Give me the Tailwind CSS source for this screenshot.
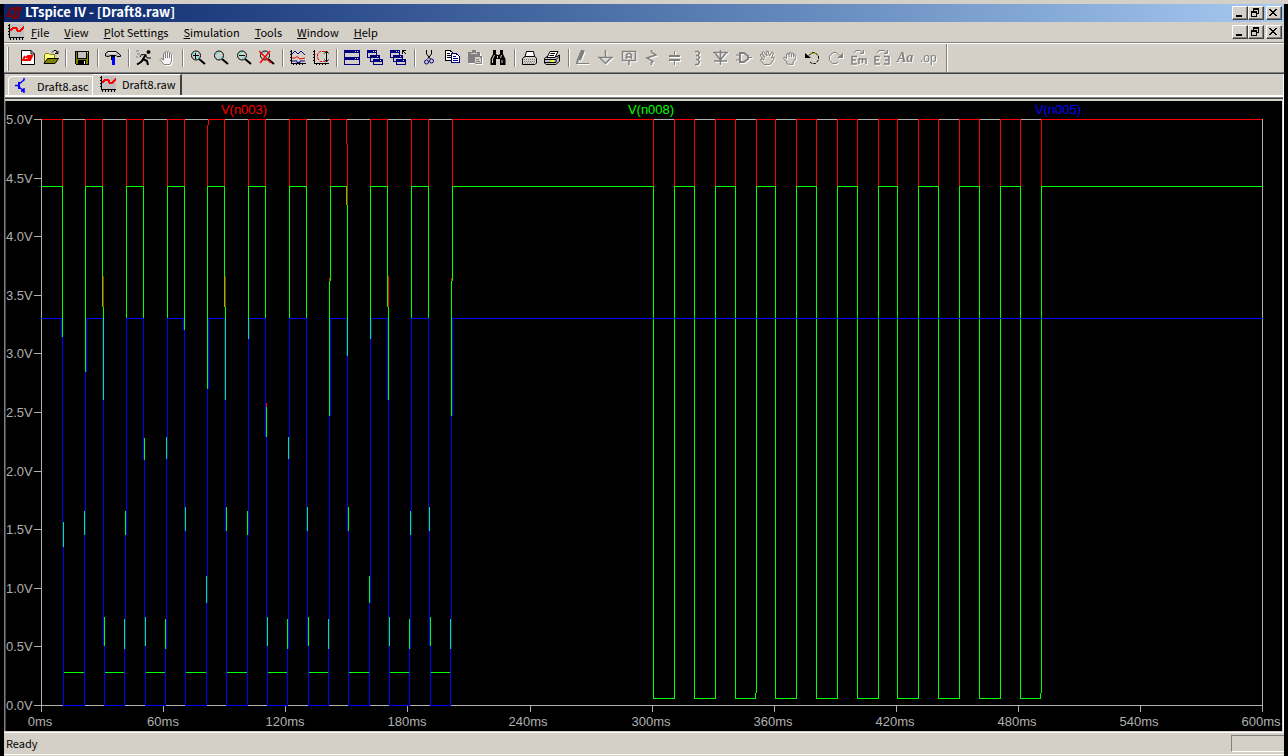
<!DOCTYPE html>
<html lang="en">
<head>
<meta charset="utf-8">
<title>LTspice IV - [Draft8.raw]</title>
<script src="https://cdn.jsdelivr.net/npm/@tailwindcss/browser@4"></script>
</head>
<body class="flex min-h-screen flex-col bg-black font-['Noto_Sans_CJK_JP',sans-serif] text-[11px] leading-4 text-black">
<div class="h-1 bg-[#d4d0c8]"></div>
<div class="ml-1 mr-1 flex flex-1 flex-col bg-[#d4d0c8]">

<!-- title bar -->
<header class="flex h-[18px] items-center bg-linear-to-r from-[#0a246a] to-[#a6caf0] pr-[2px] pl-[3px]">
  <svg class="mr-[3px] h-3 w-[15px]" viewBox="0 0 15 12" fill="none" stroke="#800000" stroke-width="2"><path d="M4 0L1 9H7M5 3L8 1H14L10 11H5M10 1L7 9"/></svg>
  <h1 class="flex-1 pb-[2px] text-[13px] font-bold text-white">LTspice IV - [Draft8.raw]</h1>
  <div class="flex">
    <button aria-label="Minimize" class="h-[14px] w-4 border border-t-white border-l-white border-r-[#404040] border-b-[#404040] bg-[#d4d0c8] shadow-[inset_-1px_-1px_#808080]"><svg class="size-3" viewBox="0 0 12 12"><path d="M3 8h6v2H3z"/></svg></button>
    <button aria-label="Restore" class="mr-[2px] h-[14px] w-4 border border-t-white border-l-white border-r-[#404040] border-b-[#404040] bg-[#d4d0c8] shadow-[inset_-1px_-1px_#808080]"><svg class="size-3" viewBox="0 0 12 12" shape-rendering="crispEdges"><path d="M4 1h6v6H8V6h1V3H5v1H4zM2 4h6v6H2zM3 6v3h4V6z" fill-rule="evenodd"/></svg></button>
    <button aria-label="Close" class="h-[14px] w-4 border border-t-white border-l-white border-r-[#404040] border-b-[#404040] bg-[#d4d0c8] shadow-[inset_-1px_-1px_#808080]"><svg class="size-3" viewBox="0 0 12 12" shape-rendering="crispEdges"><path d="M2 2h2v1h1v1h2V3h1V2h2v1H9v1H8v1H7v1h1v1h1v1h1v1H8V8H7V7H5v1H4v1H2V8h1V7h1V6h1V5H4V4H3V3H2z"/></svg></button>
  </div>
</header>

<!-- menu bar -->
<nav class="flex h-[22px] items-center border-b border-white pr-[2px] pb-[2px] pl-1 shadow-[inset_0_-1px_#808080]">
  <svg class="mr-[7px] size-4 bg-[#c0c0c0]" viewBox="0 0 16 16" shape-rendering="crispEdges"><use href="#wave"/></svg>
  <div class="flex flex-1 gap-[15px]">
    <button><u>F</u>ile</button><button><u>V</u>iew</button><button><u>P</u>lot Settings</button><button><u>S</u>imulation</button><button><u>T</u>ools</button><button><u>W</u>indow</button><button><u>H</u>elp</button>
  </div>
  <div class="flex">
    <button aria-label="Minimize plot" class="h-[14px] w-4 border border-t-white border-l-white border-r-[#404040] border-b-[#404040] shadow-[inset_-1px_-1px_#808080]"><svg class="size-3" viewBox="0 0 12 12"><path d="M3 8h6v2H3z"/></svg></button>
    <button aria-label="Restore plot" class="mr-[2px] h-[14px] w-4 border border-t-white border-l-white border-r-[#404040] border-b-[#404040] shadow-[inset_-1px_-1px_#808080]"><svg class="size-3" viewBox="0 0 12 12" shape-rendering="crispEdges"><path d="M4 1h6v6H8V6h1V3H5v1H4zM2 4h6v6H2zM3 6v3h4V6z" fill-rule="evenodd"/></svg></button>
    <button aria-label="Close plot" class="h-[14px] w-4 border border-t-white border-l-white border-r-[#404040] border-b-[#404040] shadow-[inset_-1px_-1px_#808080]"><svg class="size-3" viewBox="0 0 12 12" shape-rendering="crispEdges"><path d="M2 2h2v1h1v1h2V3h1V2h2v1H9v1H8v1H7v1h1v1h1v1h1v1H8V8H7V7H5v1H4v1H2V8h1V7h1V6h1V5H4V4H3V3H2z"/></svg></button>
  </div>
</nav>

<!-- toolbar -->
<div role="toolbar" class="flex h-[30px] items-stretch border-b border-[#404040] pb-[2px] shadow-[inset_0_-1px_#808080]">
  <i class="mt-[3px] mr-[11px] ml-[3px] w-[2px] border-r border-[#808080] bg-white"></i>
  <button aria-label="New schematic" class="w-[23px]"><svg class="size-4" viewBox="0 0 16 16"><path d="M1.500 .5H11L14.500 4V14.500H1.500Z" fill="#fff" stroke="#000"/><path d="M11 .5V4h3.500" fill="none" stroke="#000"/><path d="M5 6L3 10H7M6 8L8 6H12L10 10H7M10 6L8 10" fill="none" stroke="#f00" stroke-width="2"/></svg></button>
  <button aria-label="Open" class="w-[31px]"><span class="flex h-[18px] items-center"><svg class="mr-[6px] size-4" viewBox="0 0 16 16"><path d="M1.500 13V4.500L3 3.500H6L7 4.500H11.500V8" fill="#ffff80" stroke="#808000"/><path d="M1 13.500L4.500 8.500H15.500L12 13.500Z" fill="#808000" stroke="#000"/><path d="M9 2.500L11 .5H13L14.500 3.500M12 3.500h3V1" fill="none" stroke="#000"/></svg><i class="h-[18px] w-[2px] border-r border-white bg-[#808080]"></i></span></button>
  <button aria-label="Save" class="w-[31px]"><span class="flex h-[18px] items-center"><svg class="mr-[7px] size-4" viewBox="0 0 16 16" shape-rendering="crispEdges"><path d="M1 1H15V15H2L1 14Z"/><path d="M2 2H3V9H13V2H14V14H2Z" fill="#808000"/><path d="M4 2H12V8H4Z" fill="#c0c0c0"/><path d="M4 10H12V15H4Z"/><path d="M10 11H11V14H10ZM13 2H14V3H13Z" fill="#fff"/></svg><i class="h-[18px] w-[2px] border-r border-white bg-[#808080]"></i></span></button>
  <button aria-label="Control panel" class="w-[31px]"><span class="flex h-[18px] items-center"><svg class="mr-[7px] size-4" viewBox="0 0 16 16"><path d="M.5 6V3.500L3 1.500H11L15.500 5V6.500H12L11 5.500H6L3 6.500Z" fill="#c0c0c0" stroke="#000"/><path d="M3 3H11" stroke="#fff"/><path d="M6 6H10V10H6Z"/><path d="M7 7H10V15H7Z" fill="#00f"/></svg><i class="h-[18px] w-[2px] border-r border-white bg-[#808080]"></i></span></button>
  <button aria-label="Run" class="w-[23px]"><svg class="size-4" viewBox="0 0 16 16" fill="none" stroke="#000"><circle cx="12.500" cy="2" r="1.500" fill="#000"/><path d="M10 4.500L7 9L11 11L12 15M7.500 9L5 12L1 14.500" stroke-width="2"/><path d="M10 5L5.500 4.500L4 7M9.500 5L11 8H15"/><path d="M0 1H3M1 4H4M0 7H2" stroke="#808080"/></svg></button>
  <button aria-label="Halt" class="w-[31px]"><span class="flex h-[18px] items-center"><svg class="mr-[7px] size-4 drop-shadow-[1px_1px_0_#fff]" viewBox="0 0 16 16" fill="#f4f4f4" stroke="#808080"><path d="M5 14.500L1 9.500L2 8.500L4.500 10V3.500L5.500 3L6.500 3.500V8V2L7.500 1L8.500 2V8V2.500L9.500 1.500L10.500 2.500V8V4.500L11.500 3.500L12.500 4.500V11L11 14.500Z"/></svg><i class="h-[18px] w-[2px] border-r border-white bg-[#808080]"></i></span></button>
  <button aria-label="Zoom in" class="w-[23px]"><svg class="size-4" viewBox="0 0 16 16"><use href="#lens"/><path d="M3 5.500H9M5.500 3V9" stroke="#000"/></svg></button>
  <button aria-label="Pan" class="w-[23px]"><svg class="size-4" viewBox="0 0 16 16"><use href="#lens"/></svg></button>
  <button aria-label="Zoom out" class="w-[23px]"><svg class="size-4" viewBox="0 0 16 16"><use href="#lens"/><path d="M3 5.500H9" stroke="#000"/></svg></button>
  <button aria-label="Zoom full extents" class="w-[31px]"><span class="flex h-[18px] items-center"><svg class="mr-[7px] size-4" viewBox="0 0 16 16"><use href="#lens"/><path d="M0 1L12 13M11 1L1 13" stroke="#f00" stroke-width="1.500"/></svg><i class="h-[18px] w-[2px] border-r border-white bg-[#808080]"></i></span></button>
  <button aria-label="Pick visible traces" class="w-[23px]"><svg class="size-4" viewBox="0 0 16 16" fill="none"><use href="#axes"/><path d="M2 4L5 1L8 4L11 1L15 5M2 11H7V12.500H10V11H15" stroke="#00008b"/><path d="M2 8H5L7 6.500L10 9L15 8" stroke="#f00"/></svg></button>
  <button aria-label="Autorange" class="w-[31px]"><span class="flex h-[18px] items-center"><svg class="mr-[7px] size-4" viewBox="0 0 16 16" fill="none"><use href="#axes"/><path d="M12 1.500H7L4.500 4V8L7 11.500H12" stroke="#f00" stroke-dasharray="3 1"/><path d="M13.500 1V12M11.500 3.500L13.500 1L15.500 3.500M11.500 9.500L13.500 12L15.500 9.500" stroke="#000"/></svg><i class="h-[18px] w-[2px] border-r border-white bg-[#808080]"></i></span></button>
  <button aria-label="Tile windows" class="w-[23px]"><svg class="size-4" viewBox="0 0 16 16" shape-rendering="crispEdges"><path d="M0 0H16V15H0Z" fill="#000080"/><path d="M1 3H15V7H1ZM1 10H15V14H1ZM11 1H12V2H11ZM13 1H14V2H13ZM11 8H12V9H11ZM13 8H14V9H13Z" fill="#d4d0c8"/></svg></button>
  <button aria-label="Cascade windows" class="w-[23px]"><svg class="size-4" viewBox="0 0 16 16" shape-rendering="crispEdges"><use href="#cascade"/></svg></button>
  <button aria-label="Close windows" class="w-[31px]"><span class="flex h-[18px] items-center"><svg class="mr-[8px] size-4" viewBox="0 0 16 16" shape-rendering="crispEdges"><use href="#cascade"/><path d="M10 0H16V5H10Z" fill="#d4d0c8"/><path d="M12 0H16V1H14V2H15V3H16V4H15V3H14V2H13V4H12Z"/></svg><i class="h-[18px] w-[2px] border-r border-white bg-[#808080]"></i></span></button>
  <button aria-label="Cut" class="w-[23px]"><svg class="size-4" viewBox="0 0 16 16" fill="none"><path d="M5.500 0V4L9.500 9M10.500 0V4L6.500 9" stroke="#000"/><circle cx="5.500" cy="12" r="2" stroke="#000080"/><circle cx="10.500" cy="11" r="2" stroke="#000080"/></svg></button>
  <button aria-label="Copy" class="w-[23px]"><svg class="size-4" viewBox="0 0 16 16" fill="#fff" shape-rendering="crispEdges"><path d="M1.500 .5H6L9.500 3.500V10.500H1.500Z" stroke="#000"/><path d="M3 3.500H6M3 5.500H7M3 7.500H7" stroke="#000"/><path d="M7.500 3.500H12L15.500 6.500V12.500H7.500Z" stroke="#000080"/><path d="M9 6.500H12M9 8.500H14M9 10.500H14" stroke="#000080"/></svg></button>
  <button aria-label="Paste" class="w-[23px]"><svg class="size-4 drop-shadow-[1px_1px_0_#fff]" viewBox="0 0 16 16" shape-rendering="crispEdges"><path d="M1 2H5V0H9V2H13V6H15V14H8V13H1Z" fill="#808080"/><path d="M4 3H10V4H4ZM8 7H13V8H14V13H8ZM9 9V10H12V9Z" fill="#d4d0c8"/><path d="M9 11H13V12H9Z" fill="#808080"/></svg></button>
  <button aria-label="Find" class="w-[31px]"><span class="flex h-[18px] items-center"><svg class="mr-[8px] size-4" viewBox="0 0 16 16"><path d="M3 0H6V4L7.500 5H8.500L10 4V0H13V4L15.500 9V15H10V9H6V15H.5V9L3 4Z"/><path d="M4.500 5L2.500 9V13M11.500 5L10.500 8M12 10V13M7.500 6V8" stroke="#d4d0c8"/></svg><i class="h-[18px] w-[2px] border-r border-white bg-[#808080]"></i></span></button>
  <button aria-label="Print setup" class="w-[23px]"><svg class="size-4" viewBox="0 0 16 16"><path d="M1.500 14.500V8.500L4 6.500H14L15.500 8.500V13L14 14.500Z" fill="#d4d0c8" stroke="#000"/><path d="M4 6.500L5.500 1.500H12.500L13.500 6.500Z" fill="#fff" stroke="#000"/><path d="M3 9.500H14M3 11.500H14M4 13H14" stroke="#808080" stroke-dasharray="1 1"/></svg></button>
  <button aria-label="Print" class="w-[31px]"><span class="flex h-[18px] items-center"><svg class="mr-[8px] size-4" viewBox="0 0 16 16"><path d="M.5 8.500L3 6.500H13L15.500 5V11L12 14.500H2L.5 13Z" fill="#c0c0c0" stroke="#000"/><path d="M3 7.500L6 1.500H14L11 7.500Z" fill="#fff" stroke="#000"/><path d="M6.500 3.500H11M5.500 5.500H10M1 9.500H12L15 6.500M1 12.500H12V9.500" fill="none" stroke="#000"/><path d="M7 11H10" stroke="#ff0" stroke-width="2"/></svg><i class="h-[18px] w-[2px] border-r border-white bg-[#808080]"></i></span></button>

  <button aria-label="Wire" class="w-[23px]"><svg class="size-4 drop-shadow-[1px_1px_0_#fff]" viewBox="0 0 16 16" fill="none" stroke="#808080"><path d="M8 0L4 10" stroke-width="4"/><path d="M2 14L3 9" stroke-width="2"/><path d="M1 13.500H14"/></svg></button>
  <button aria-label="Ground" class="w-[23px]"><svg class="size-4 drop-shadow-[1px_1px_0_#fff]" viewBox="0 0 16 16" fill="none" stroke="#808080"><path d="M7.500 0V7M0 7.500H15M2 8L7.500 13.500L13 8" stroke-width="1.500"/></svg></button>
  <button aria-label="Label net" class="w-[23px]"><svg class="size-4 drop-shadow-[1px_1px_0_#fff]" viewBox="0 0 16 16" fill="none" stroke="#808080"><path d="M1.500 1.500H14.500V10.500H1.500ZM8 10.500V15" stroke-width="1.500"/><path d="M5.500 9V5L7 3.500H9L10.500 5V9M5.500 7H10.500" stroke-width="1.500"/></svg></button>
  <button aria-label="Resistor" class="w-[23px]"><svg class="size-4 drop-shadow-[1px_1px_0_#fff]" viewBox="0 0 16 16" fill="none" stroke="#808080"><path d="M7.500 0V2L12 5L3 8L9 11.500L7.500 12.500V15" stroke-width="1.500"/></svg></button>
  <button aria-label="Capacitor" class="w-[23px]"><svg class="size-4 drop-shadow-[1px_1px_0_#fff]" viewBox="0 0 16 16" fill="none" stroke="#808080"><path d="M7.500 1V6M7.500 10V15" /><path d="M2 6H13M2 10H13" stroke-width="2"/></svg></button>
  <button aria-label="Inductor" class="w-[23px]"><svg class="size-4 drop-shadow-[1px_1px_0_#fff]" viewBox="0 0 16 16" fill="none" stroke="#808080"><path d="M5 1.500H8L9.500 3L8 5.500H6H8L9.500 7.500L8 9.500H6H8L9.500 12L8 14.500H5" stroke-width="1.500"/></svg></button>
  <button aria-label="Diode" class="w-[23px]"><svg class="size-4 drop-shadow-[1px_1px_0_#fff]" viewBox="0 0 16 16" fill="none" stroke="#808080"><path d="M0 2.500H15M1 11H14" stroke-width="1.500"/><path d="M2 3L7.500 10L13 3M7.500 0V15" stroke-width="1.500"/></svg></button>
  <button aria-label="Component" class="w-[23px]"><svg class="size-4 drop-shadow-[1px_1px_0_#fff]" viewBox="0 0 16 16" fill="none" stroke="#808080"><path d="M4 3H8L12 6V9L8 12H4Z" stroke-width="2"/><path d="M0 5H4M0 10H4M12 7.500H16"/></svg></button>
  <button aria-label="Move" class="w-[23px]"><svg class="size-4 drop-shadow-[1px_1px_0_#fff]" viewBox="0 0 16 16" fill="none" stroke="#808080"><path d="M5 14.500L1.500 10L2.500 8.500L5 10L1 5L2 4L6 7.500L3 2.500L4.500 1.500L8 6L7.500 1.500L9 1L10.500 6L13 2L14.500 3L12.500 8L15 7V9L11 14.500Z"/></svg></button>
  <button aria-label="Drag" class="w-[23px]"><svg class="size-4 drop-shadow-[1px_1px_0_#fff]" viewBox="0 0 16 16" fill="none" stroke="#808080"><path d="M5 14V12L1.500 8.500L2.500 7L4.500 8.500V4L6 3L7 5V3L8.500 2L9.500 4V3.500L11 3L11.500 5L13 4.500L13.500 9L11 12V14.500ZM7 5V7M9.500 4V7M11.500 5V7"/></svg></button>
  <button aria-label="Undo" class="w-[23px]"><svg class="size-4" viewBox="0 0 16 16" fill="none" stroke="#000"><path d="M4 5.500L7 2.500H10L13.500 6V10L10.500 13.500H7L5 12" stroke-dasharray="3 1"/><path d="M5 4L8 3H10L12.500 5.500" stroke="#808000"/><path d="M0 3L6 8H0Z" fill="#000" stroke="none"/></svg></button>
  <button aria-label="Redo" class="w-[23px]"><svg class="size-4 drop-shadow-[1px_1px_0_#fff]" viewBox="0 0 16 16" fill="none" stroke="#808080"><path d="M11.500 5.500L8 2.500H5L1.500 6V10L4.500 13.500H8L10 12"/><path d="M15 3V8H9Z" fill="#808080" stroke="none"/></svg></button>
  <button aria-label="Rotate" class="w-[23px]"><svg class="size-4 drop-shadow-[1px_1px_0_#fff]" viewBox="0 0 16 16" fill="none" stroke="#808080"><path d="M3 3L5 .5H9L12 3M9 3.500H12.500V0"/><path d="M6 6.500H1V14H6M1 10H5M8 14V9H15V14M11.500 9V13" stroke-width="1.500"/></svg></button>
  <button aria-label="Mirror" class="w-[23px]"><svg class="size-4 drop-shadow-[1px_1px_0_#fff]" viewBox="0 0 16 16" fill="none" stroke="#808080"><path d="M3 3L5 .5H10L13 3M10 3.500H13.500V0"/><path d="M6 6.500H1V14H6M1 10H5M10 6.500H15V14H10M15 10H11" stroke-width="1.500"/></svg></button>
  <button aria-label="Text" class="w-[23px] text-left font-['Liberation_Serif',serif] text-[14px] font-bold text-[#808080] italic drop-shadow-[1px_1px_0_#fff]">Aa</button>
  <button aria-label="SPICE directive" class="w-[26px] text-left font-['Liberation_Sans',sans-serif] text-[12px] text-[#808080] drop-shadow-[1px_1px_0_#fff]">.op</button>
  <i class="-mb-px w-[2px] border-r border-white bg-[#808080]"></i>
</div>

<!-- document area -->
<main class="flex flex-1 flex-col border-r border-l border-r-white border-l-[#808080]">
  <div role="tablist" class="flex h-[23px] items-end border-b-2 border-white pl-[3px]">
    <button role="tab" class="flex h-[19px] w-[85px] items-center gap-[6px] rounded-tl-sm border-t border-r border-l border-white pl-[6px]">
      <svg class="size-4" viewBox="0 0 16 16" fill="none" stroke="#00f"><path d="M4 4V11" stroke-width="2"/><path d="M0 7.500H4M4 6L9 2V0M4 9L9 13V15M6 13H9V10" stroke-width="1.500"/></svg>Draft8.asc</button>
    <button role="tab" aria-selected="true" class="flex h-[21px] w-[89px] items-center gap-[6px] border-t border-r-2 border-t-white border-r-[#404040] pb-[2px] pl-[7px]">
      <svg class="size-4 bg-[#c0c0c0]" viewBox="0 0 16 16" shape-rendering="crispEdges"><use href="#wave"/></svg>Draft8.raw</button>
  </div>
  <div class="h-1 border-t border-b border-t-[#808080] border-b-[#d4d0c8] bg-[#d4d0c8] shadow-[inset_0_1px_#404040]"></div>
  <div class="mr-px flex flex-1 border-l border-[#404040] bg-black">
    <svg class="w-full flex-1" viewBox="6 101 1276 630" role="img" aria-label="Waveform plot">
      <g transform="translate(.5 .5)" fill="none" stroke-linecap="square" shape-rendering="crispEdges">
        <path stroke="#b0b0b0" d="M34 119H1262V711M41 119V711M34 705H1262M34 178H41M34 236H41M34 295H41M34 353H41M34 412H41M34 471H41M34 529H41M34 588H41M34 646H41M163 705V711M285 705V711M407 705V711M530 705V711M652 705V711M774 705V711M896 705V711M1018 705V711M1140 705V711"/>
        <path stroke="#f00" d="M42 119H62V186M85 186V119H102V186M103 276V306M126 186V119H143V186M167 186V119H184V186M207 186V125M208 124V119H224V186M225 276V306M248 186V119H265V186M266 403V407M289 186V119H306V186M330 186V119H346V143M329 278V280M347 144V204M370 186V119H387V186M388 276V306M411 186V119H428V186M452 186V119H653V186M451 278V280M674 186V119H694V186M715 186V119H735V186M756 186V119H775V186M796 186V119H816V186M837 186V119H857V186M878 186V119H897V186M918 186V119H938V186M959 186V119H979V186M1000 186V119H1020V186M1041 186V119H1261"/>
        <path stroke="#0f0" d="M41 186H62V336M63 522V546M64 672H84M84 511V534M85 371V186H102V306M103 307V399M104 617V645M105 672H124M124 619V648M125 511V534M126 317V186H143V317M144 438V459M145 617V645M146 672H165M165 619V648M166 437V458M167 317V186H184V329M185 507V530M186 672H206M206 576V602M207 388V186H224V306M225 307V399M226 507V530M227 672H247M247 511V534M248 338V186H265V317M266 407V436M267 617V645M268 672H287M287 619V648M288 437V458M289 317V186H306V317M307 507V530M308 617V645M309 672H328M328 619V648M329 415V281M330 280V186H346V204M347 205V355M348 507V530M349 672H369M369 576V602M370 338V186H387V306M388 307V399M389 617V645M390 672H409M409 619V648M410 511V534M411 317V186H428V317M429 507V530M430 617V645M431 672H450M450 619V648M451 415V281M452 280V186H653V698H674V186H694V698H715V186H735V698H755V693M756 692V186H775V698H796V186H816V698H837V186H857V698H878V186H897V698H918V186H938V698H959V186H979V698H1000V186H1020V698H1040V693M1041 692V186H1262"/>
        <path stroke="#00f" d="M41 318H61V336M62 337V546M63 547V705H84V535M85 534V372M86 371V318H102V399M103 400V645M104 646V705H124V649M125 648V535M126 534V318H143V459M144 460V645M145 646V705H165V649M166 648V459M167 458V318H183V329M184 330V530M185 531V705H206V603M207 602V389M208 388V318H224V399M225 400V530M226 531V705H247V535M248 534V339M249 338V318H265V436M266 437V645M267 646V705H287V649M288 648V459M289 458V318H306V530M307 531V645M308 646V705H328V649M329 648V416M330 415V318H346V355M347 356V530M348 531V705H369V603M370 602V339M371 338V318H387V399M388 400V645M389 646V705H409V649M410 648V535M411 534V318H428V530M429 531V645M430 646V705H450V649M451 648V416M452 415V318H1262"/>
      </g>
      <g class="fill-[#b0b0b0] font-['Liberation_Sans',Arial,sans-serif] text-[13px]">
        <text x="6" y="124">5.0V</text><text x="6" y="183">4.5V</text><text x="6" y="241">4.0V</text><text x="6" y="300">3.5V</text><text x="6" y="358">3.0V</text><text x="6" y="417">2.5V</text><text x="6" y="476">2.0V</text><text x="6" y="534">1.5V</text><text x="6" y="593">1.0V</text><text x="6" y="651">0.5V</text><text x="6" y="710">0.0V</text>
        <g text-anchor="middle"><text x="40" y="726">0ms</text><text x="163" y="726">60ms</text><text x="285" y="726">120ms</text><text x="407" y="726">180ms</text><text x="528" y="726">240ms</text><text x="651" y="726">300ms</text><text x="773" y="726">360ms</text><text x="895" y="726">420ms</text><text x="1017" y="726">480ms</text><text x="1139" y="726">540ms</text><text x="1261" y="726">600ms</text></g>
      </g>
      <g class="font-['Liberation_Sans',Arial,sans-serif] text-[13px]" text-anchor="middle">
        <text x="244" y="114" fill="#f00">V(n003)</text><text x="651" y="114" fill="#0f0">V(n008)</text><text x="1058" y="114" fill="#00f">V(n005)</text>
      </g>
    </svg>
  </div>
</main>

<!-- status bar -->
<footer class="flex h-[25px] flex-col">
  <div class="mt-px flex h-[23px] items-center justify-between border-t border-b border-white pl-[2px]">
    <span class="pb-[2px]">Ready</span>
    <i class="h-[17px] w-[53px] border-t border-b border-l border-t-[#808080] border-b-white border-l-[#808080]"></i>
  </div>
</footer>
</div>

<svg class="hidden">
  <defs>
    <g id="wave"><path d="M1 0H2V13H16V14H1ZM0 1H1V2H0ZM0 4H1V5H0ZM0 7H1V8H0ZM0 10H1V11H0ZM2 14H3V16H2ZM5 14H6V16H5ZM8 14H9V16H8ZM11 14H12V16H11ZM14 14H15V16H14Z"/><path d="M2 7L5 4H8L10 7H12L16 3" fill="none" stroke="#f00" stroke-width="2"/></g>
    <g id="axes" shape-rendering="crispEdges"><path fill="#000" d="M1 0H2V13H16V14H1ZM0 1H1V2H0ZM0 4H1V5H0ZM0 7H1V8H0ZM0 10H1V11H0ZM3 14H4V15H3ZM6 14H7V15H6ZM9 14H10V15H9ZM12 14H13V15H12Z"/></g>
    <g id="lens"><path d="M9 9L15 14" stroke="#000" stroke-width="2"/><circle cx="6" cy="5.500" r="4.500" fill="#d4d0c8" stroke="#000"/><path d="M3 5L6 2M6 9L9 6" stroke="#0ff"/></g>
    <g id="cascade"><path fill="#000080" d="M0 0H10V8H0ZM3 5H13V12H3ZM6 9H16V15H6Z"/><path fill="#d4d0c8" d="M1 3H9V5H3V7H1ZM4 8H12V9H6V11H4ZM7 12H15V14H7ZM6 1H7V2H6ZM8 1H9V2H8ZM10 6H11V7H10ZM13 10H14V11H13Z"/></g>
  </defs>
</svg>
</body>
</html>
